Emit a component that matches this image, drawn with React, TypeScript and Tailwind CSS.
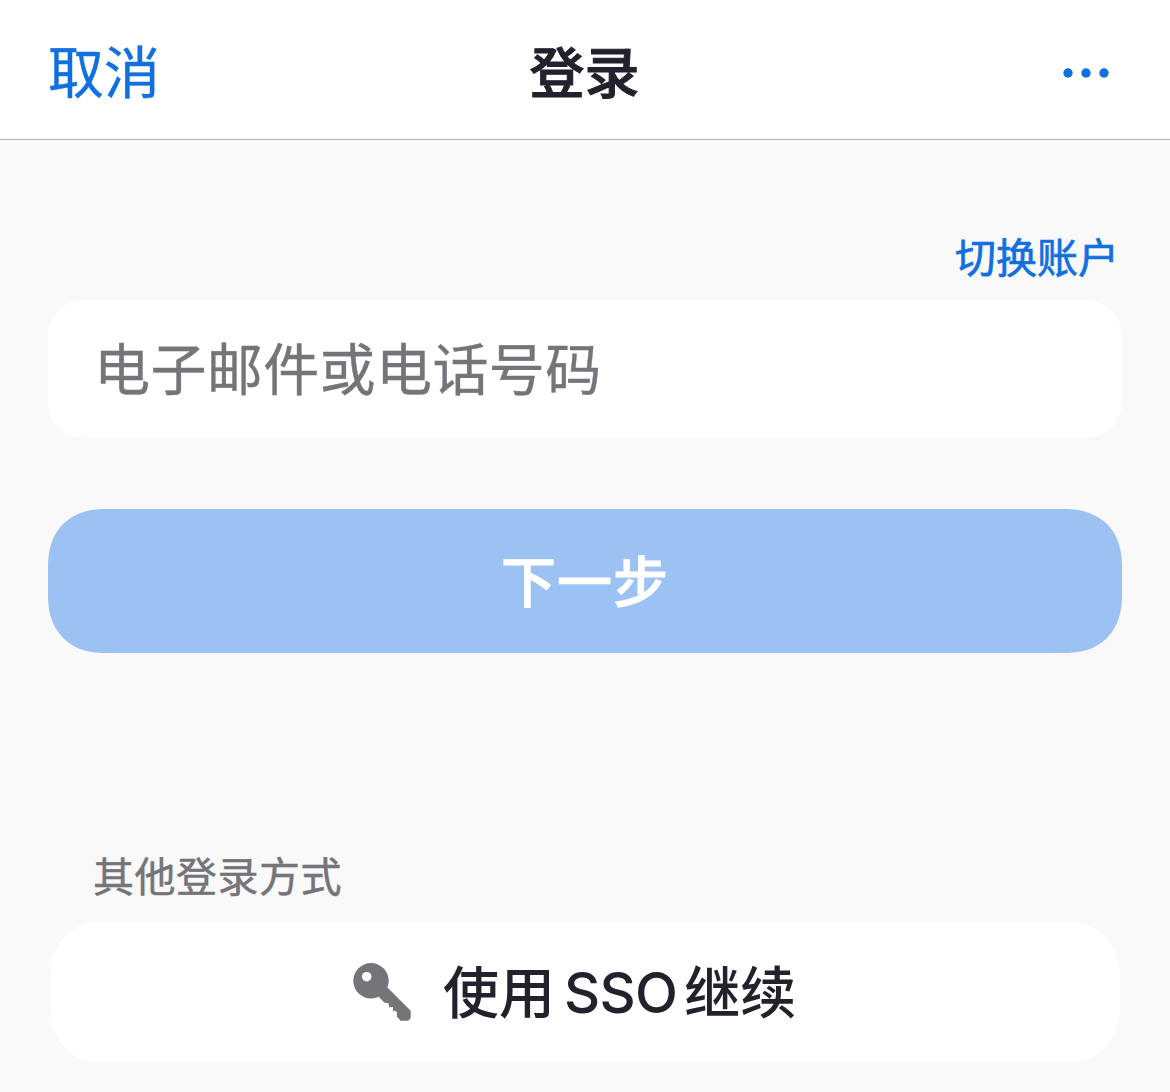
const KeyIcon = () => (
  <svg width="60" height="60" viewBox="0 0 60 60" fill="#757479">
    <circle cx="19" cy="18.8" r="17.7" />
    <path d="M26.5 34.5L32.5 40.8L36.3 41L37.3 45.3L41 45.1V49.5L42.8 48.5L45 50.5V54.7L48.7 58.7H56.3L58.7 56V48.7L35.5 25.5Z" />
    <circle cx="14.7" cy="14.7" r="4.8" fill="#fff" />
  </svg>
);

const App = () => {
  return (
    <div className="flex h-[1092px] w-[1170px] flex-col overflow-hidden bg-[#f9f9f9] font-['Inter','Noto_Sans_CJK_SC',sans-serif]">
      {/* Navigation bar */}
      <header className="grid h-[140px] shrink-0 grid-cols-3 items-center border-b border-[#b2b2b2] bg-white px-12 pt-[6px]">
        <button className="justify-self-start text-[56px] leading-[84px] text-[#1170e0] [-webkit-text-stroke:0.4px]">取消</button>
        <h1 className="-ml-px justify-self-center text-[55px] leading-[84px] font-medium text-[#22212c] [-webkit-text-stroke:1px]">登录</h1>
        <button aria-label="更多" className="mr-3 justify-self-end">
          <svg width="48" height="12" viewBox="0 0 48 12" fill="#1170e0">
            <circle cx="6" cy="6" r="4.7" />
            <circle cx="24" cy="6" r="4.7" />
            <circle cx="42" cy="6" r="4.7" />
          </svg>
        </button>
      </header>

      <main className="flex flex-col px-12">
        <a href="#" className="mt-[88px] h-[60px] self-end pr-[3px] text-[41px] leading-[60px] text-[#1170e0] [-webkit-text-stroke:0.7px]">
          切换账户
        </a>

        <input
          type="text"
          placeholder="电子邮件或电话号码"
          className="mt-[12px] h-[138px] rounded-[36px] bg-white pt-[2px] pr-12 pl-[46px] text-[56px] tracking-[0.4px] text-[#22212c] [-webkit-text-stroke:0.4px] placeholder:text-[#757479] placeholder:opacity-100"
        />

        <button className="mt-[71px] h-[144px] rounded-[58px] bg-[#9bc2f3] pt-[2px] text-[55px] font-medium tracking-[1px] text-white [-webkit-text-stroke:1px] [corner-shape:superellipse(1.2)]">
          下一步
        </button>

        {/* Other sign-in methods */}
        <h2 className="mt-[194px] ml-[45px] h-[60px] text-[41px] leading-[60px] tracking-[0.5px] text-[#757479] [-webkit-text-stroke:0.5px]">
          其他登录方式
        </h2>
        <button className="mx-[2px] mt-[14px] flex h-[142px] items-center rounded-[58px] bg-white pl-[302px] [corner-shape:superellipse(1.2)]">
          <KeyIcon />
          <span className="mt-[2px] ml-[31px] flex text-[56px] font-medium text-[#22212c]">
            使用<span className="mr-[7px] ml-[9px] tracking-[-0.7px]">SSO</span>继续
          </span>
        </button>
      </main>
    </div>
  );
};

export default App;
